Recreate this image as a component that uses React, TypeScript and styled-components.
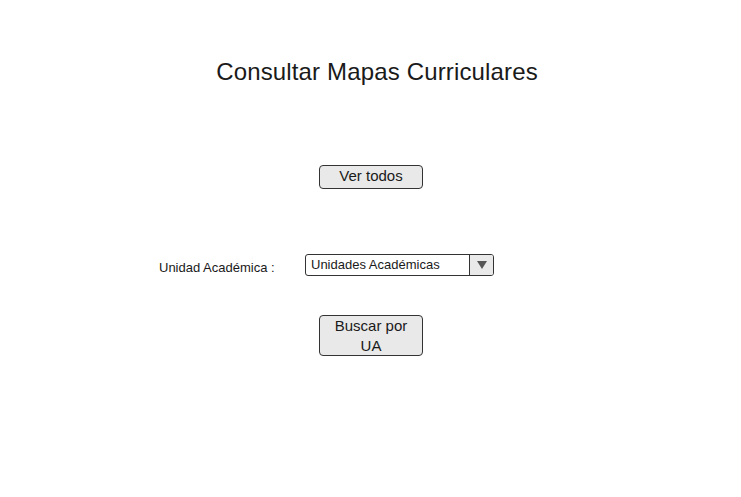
import React, { useState } from 'react';
import styled, { createGlobalStyle } from 'styled-components';

const GlobalStyle = createGlobalStyle`
    html, body {
        margin: 0;
        padding: 0;
        background: #ffffff;
        font-family: "Liberation Sans", Arial, sans-serif;
        color: #1a1a1a;
    }
`;

const Page = styled.main`
    width: 741px;
    height: 497px;
    display: flex;
    flex-direction: column;
    align-items: center;
    padding-top: 58px;
    box-sizing: border-box;
`;

const Title = styled.h1`
    margin: 0 0 0 13px;
    font-size: 24px;
    font-weight: normal;
    line-height: 28px;
    letter-spacing: 0.15px;
`;

const Button = styled.button<{ $top: number; $tall?: boolean }>`
    margin-top: ${p => p.$top}px;
    margin-left: 1px;
    width: 104px;
    height: ${p => (p.$tall ? 41 : 24)}px;
    padding: 0 8px ${p => (p.$tall ? 1 : 3)}px;
    background: #e9e9e9;
    border: 1px solid #333333;
    border-radius: 4px;
    font-family: "Liberation Sans", Arial, sans-serif;
    font-size: 15px;
    line-height: 20px;
    color: #1a1a1a;
    cursor: pointer;
`;

const FormRow = styled.div`
    margin-top: 65px;
    width: 741px;
    box-sizing: border-box;
    padding-left: 159px;
    display: grid;
    grid-template-columns: 146px 189px;
    align-items: center;
`;

const Label = styled.label`
    font-size: 13px;
    padding-top: 5px;
`;

const Select = styled.div`
    height: 22px;
    display: flex;
    border: 1px solid #333333;
    border-radius: 3px;
    box-sizing: border-box;
    overflow: hidden;
    cursor: pointer;
`;

const SelectText = styled.span`
    flex: 1;
    padding-left: 5px;
    font-size: 13px;
    line-height: 20px;
`;

const Arrow = styled.span`
    width: 23px;
    border-left: 1px solid #333333;
    background: #e9e9e9;
    display: flex;
    align-items: center;
    justify-content: center;
`;

export default function App() {
    const [ua] = useState('Unidades Académicas');

    return (
        <>
            <GlobalStyle />
            <Page>
                <Title>Consultar Mapas Curriculares</Title>
                <Button $top={79}>Ver todos</Button>
                <FormRow>
                    <Label>Unidad Académica :</Label>
                    <Select>
                        <SelectText>{ua}</SelectText>
                        <Arrow>
                            <svg width="10" height="8" viewBox="0 0 10 8">
                                <path d="M0 0 H10 L5 8 Z" fill="#555555" />
                            </svg>
                        </Arrow>
                    </Select>
                </FormRow>
                <Button $top={39} $tall>Buscar por UA</Button>
            </Page>
        </>
    );
}
